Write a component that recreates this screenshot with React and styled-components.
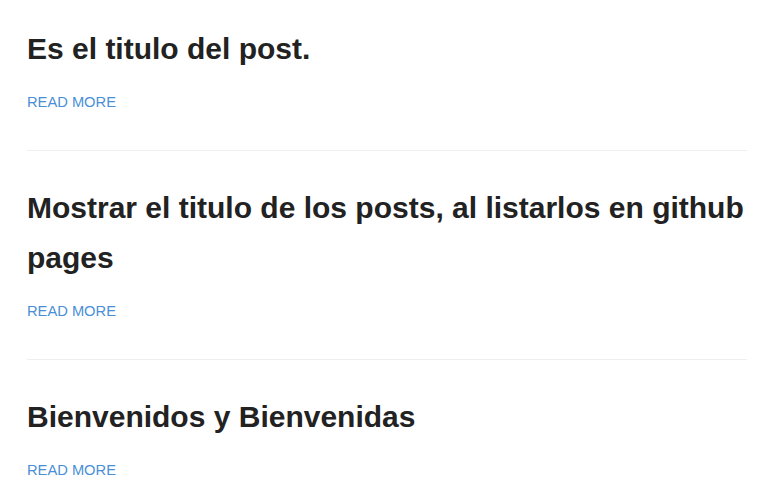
import styled, { createGlobalStyle } from 'styled-components'

const GlobalStyle = createGlobalStyle`
  body {
    margin: 0;
    background: #fff;
    font-family: 'Liberation Sans', Arial, sans-serif;
  }
`

const posts = [
  { id: 1, title: 'Es el titulo del post.' },
  {
    id: 2,
    title: 'Mostrar el titulo de los posts, al listarlos en github pages'
  },
  { id: 3, title: 'Bienvenidos y Bienvenidas' }
]

const PostList = styled.main`
  width: 720px;
  margin-left: 27px;
  padding-top: 24px;
`

const Post = styled.article`
  display: flex;
  flex-direction: column;
  align-items: flex-start;
  padding-bottom: 38px;
  margin-bottom: 32px;
  border-bottom: 1px solid #eeeeee;

  &:last-child {
    border-bottom: none;
  }
`

const Title = styled.h2`
  margin: 0;
  font-size: 30px;
  line-height: 50px;
  font-weight: 700;
  color: #222222;
`

const ReadMore = styled.a`
  margin-top: 18px;
  font-size: 14.7px;
  line-height: 20px;
  color: #4a8fd6;
  text-decoration: none;
  text-transform: uppercase;
`

const App = () => {
  return (
    <>
      <GlobalStyle />
      <PostList>
        {posts.map((post) => (
          <Post key={post.id}>
            <Title>{post.title}</Title>
            <ReadMore href='#'>Read more</ReadMore>
          </Post>
        ))}
      </PostList>
    </>
  )
}

export default App
